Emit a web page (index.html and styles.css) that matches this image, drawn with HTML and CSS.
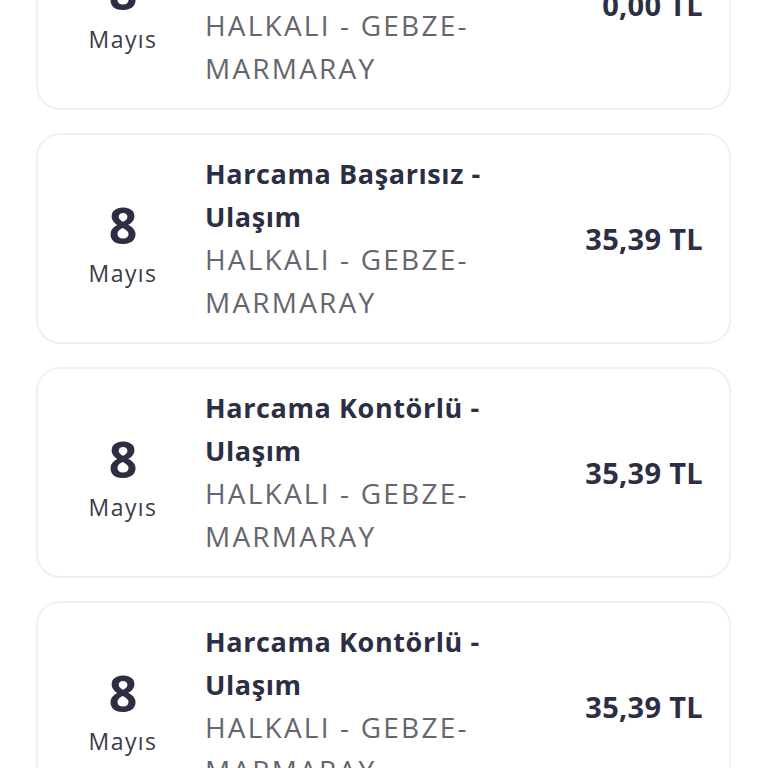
FILE: index.html
```html
<!DOCTYPE html>
<html lang="tr">
<head>
    <meta charset="UTF-8">
    <meta name="viewport" content="width=device-width, initial-scale=1.0">
    <title>Hesap Hareketleri</title>
    <link rel="stylesheet" href="styles.css">
</head>
<body>
    <div class="list">
        <div class="card">
            <div class="date">
                <span class="day">8</span>
                <span class="month">Mayıs</span>
            </div>
            <div class="info">
                <div class="title">Harcama Kontörlü - Ulaşım</div>
                <div class="place">HALKALI - GEBZE-MARMARAY</div>
            </div>
            <div class="amount">0,00 TL</div>
        </div>

        <div class="card">
            <div class="date">
                <span class="day">8</span>
                <span class="month">Mayıs</span>
            </div>
            <div class="info">
                <div class="title">Harcama Başarısız - Ulaşım</div>
                <div class="place">HALKALI - GEBZE-MARMARAY</div>
            </div>
            <div class="amount">35,39 TL</div>
        </div>

        <div class="card">
            <div class="date">
                <span class="day">8</span>
                <span class="month">Mayıs</span>
            </div>
            <div class="info">
                <div class="title">Harcama Kontörlü - Ulaşım</div>
                <div class="place">HALKALI - GEBZE-MARMARAY</div>
            </div>
            <div class="amount">35,39 TL</div>
        </div>

        <div class="card">
            <div class="date">
                <span class="day">8</span>
                <span class="month">Mayıs</span>
            </div>
            <div class="info">
                <div class="title">Harcama Kontörlü - Ulaşım</div>
                <div class="place">HALKALI - GEBZE-MARMARAY</div>
            </div>
            <div class="amount">35,39 TL</div>
        </div>
    </div>
</body>
</html>
```

FILE: styles.css
```css
body {
    margin: 0;
    padding: 0;
    height: 100vh;
    overflow: hidden;
    background-color: #fff;
    font-family: "Open Sans", Lato, sans-serif;
    color: #2c2e44;
}

.list {
    margin-top: -101px;
    padding: 0 37px 0 36px;
    display: flex;
    flex-direction: column;
    gap: 23px;
}

.card {
    display: flex;
    align-items: center;
    border: 2px solid #f0f0f3;
    border-radius: 24px;
    padding: 17px 26px 18px 20px;
    background-color: #fff;
}

.date {
    width: 130px;
    flex-shrink: 0;
    display: flex;
    flex-direction: column;
    align-items: center;
    margin-top: 6px;
}

.day {
    font-size: 50px;
    font-weight: 700;
    line-height: 60px;
}

.month {
    margin-top: 3px;
    font-size: 23px;
    line-height: 30px;
    letter-spacing: 1.4px;
    color: #3a3b47;
}

.info {
    width: 310px;
    margin-left: 17px;
    line-height: 43px;
}

.title {
    font-size: 27px;
    font-weight: 700;
    letter-spacing: 0.6px;
}

.place {
    font-size: 28px;
    letter-spacing: 2.2px;
    color: #65666e;
}

.amount {
    margin-left: auto;
    font-size: 29px;
    font-weight: 700;
    letter-spacing: 0.3px;
    white-space: nowrap;
}
```
